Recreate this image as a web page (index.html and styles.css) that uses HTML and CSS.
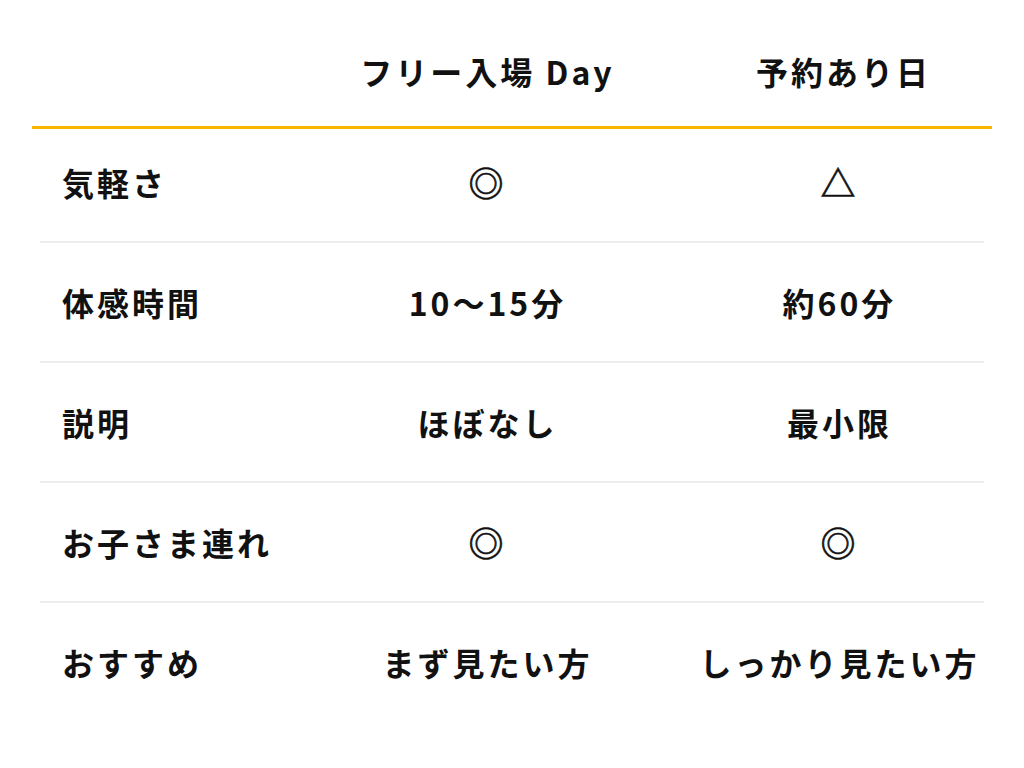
FILE: index.html
```html
<!DOCTYPE html>
<html lang="ja">
<head>
<meta charset="utf-8">
<title>比較表</title>
<link rel="stylesheet" href="styles.css">
</head>
<body>
<div class="table">
  <div class="head">
    <div class="cell label"></div>
    <div class="cell">フリー入場 Day</div>
    <div class="cell">予約あり日</div>
  </div>
  <div class="body">
    <div class="row first">
      <div class="cell label">気軽さ</div>
      <div class="cell sym">◎</div>
      <div class="cell sym">△</div>
    </div>
    <div class="row">
      <div class="cell label">体感時間</div>
      <div class="cell">10〜15分</div>
      <div class="cell">約60分</div>
    </div>
    <div class="row">
      <div class="cell label">説明</div>
      <div class="cell">ほぼなし</div>
      <div class="cell">最小限</div>
    </div>
    <div class="row">
      <div class="cell label">お子さま連れ</div>
      <div class="cell sym">◎</div>
      <div class="cell sym">◎</div>
    </div>
    <div class="row last">
      <div class="cell label">おすすめ</div>
      <div class="cell">まず見たい方</div>
      <div class="cell">しっかり見たい方</div>
    </div>
  </div>
</div>
</body>
</html>
```
FILE: styles.css
```css
html, body {
  margin: 0;
  padding: 0;
  background: #ffffff;
}
body {
  font-family: "Noto Sans CJK JP", "Noto Sans", sans-serif;
  color: #111111;
  font-weight: 700;
  font-size: 32px;
  letter-spacing: 3px;
}
.table {
  width: 960px;
  margin: 0 32px;
}
.head {
  display: grid;
  grid-template-columns: 248px 412px 300px;
  height: 126px;
  border-bottom: 3px solid #f7b500;
  align-items: start;
}
.head .cell {
  padding-top: 49px;
  line-height: 44px;
  text-align: center;
  padding-left: 3px;
}
.body {
  margin: 0 8px;
}
.row {
  display: grid;
  grid-template-columns: 240px 412px 292px;
  align-items: center;
  height: 118px;
  border-bottom: 2px solid #ececec;
}
.row.first {
  height: 112px;
}
.row.first .cell {
  margin-bottom: 6px;
}
.row.last {
  border-bottom: none;
}
.cell {
  text-align: center;
  line-height: 40px;
  padding-left: 3px;
}
.cell.label {
  text-align: left;
  padding-left: 22px;
}
.cell.sym {
  font-weight: 700;
  font-size: 35px;
  letter-spacing: 0;
  padding-left: 0;
  -webkit-text-stroke: 0.6px #111111;
}
```
